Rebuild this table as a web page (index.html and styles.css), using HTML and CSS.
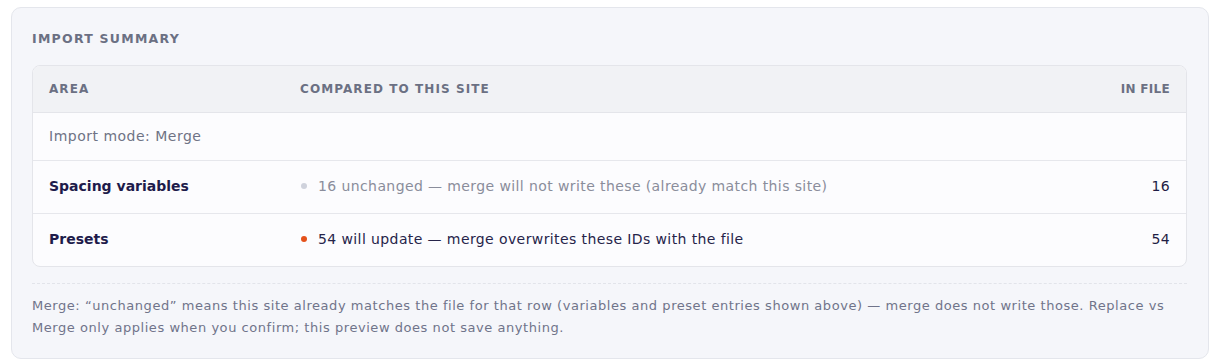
FILE: index.html
```html
<!DOCTYPE html>
<html lang="en">
<head>
<meta charset="utf-8">
<title>Import summary</title>
<link rel="stylesheet" href="styles.css">
</head>
<body>
<section class="panel">
  <h2 class="panel-title">Import summary</h2>
  <div class="table-wrap">
    <table class="summary">
      <colgroup>
        <col class="col-area">
        <col class="col-compare">
        <col class="col-count">
      </colgroup>
      <thead>
        <tr>
          <th>Area</th>
          <th>Compared to this site</th>
          <th class="num">In file</th>
        </tr>
      </thead>
      <tbody>
        <tr class="mode-row">
          <td colspan="3">Import mode: Merge</td>
        </tr>
        <tr>
          <td class="area">Spacing variables</td>
          <td class="status muted"><span class="dot dot-grey"></span>16 unchanged — merge will not write these (already match this site)</td>
          <td class="num">16</td>
        </tr>
        <tr>
          <td class="area">Presets</td>
          <td class="status"><span class="dot dot-orange"></span>54 will update — merge overwrites these IDs with the file</td>
          <td class="num">54</td>
        </tr>
      </tbody>
    </table>
  </div>
  <p class="note">Merge: “unchanged” means this site already matches the file for that row (variables and preset entries shown above) — merge does not write those. Replace vs Merge only applies when you confirm; this preview does not save anything.</p>
</section>
</body>
</html>
```

FILE: styles.css
```css
* { box-sizing: border-box; }

body {
  margin: 0;
  padding: 7px 4px 4px 11px;
  background: #ffffff;
  font-family: "DejaVu Sans", "Inter", sans-serif;
  color: #1f1d45;
}

.panel {
  background: #f5f6fa;
  border: 1px solid #e4e6ec;
  border-radius: 10px;
  padding: 22px 21px 19px 20px;
}

.panel-title {
  margin: 0 0 17px;
  font-size: 12.5px;
  line-height: 18px;
  font-weight: 700;
  letter-spacing: 0.1em;
  text-transform: uppercase;
  color: #6b7083;
}

.table-wrap {
  background: #fcfcfe;
  border: 1px solid #e4e5ea;
  border-radius: 8px;
  overflow: hidden;
}

.summary {
  width: 100%;
  border-collapse: collapse;
  font-size: 14px;
}

.col-area { width: 251px; }
.col-count { width: 120px; }

.summary th {
  background: #f1f2f5;
  text-align: left;
  font-size: 12px;
  line-height: 18px;
  font-weight: 700;
  letter-spacing: 0.09em;
  text-transform: uppercase;
  color: #6b7083;
  padding: 14px 16px 14px;
  border-bottom: 1px solid #e4e5ea;
}

.summary td {
  padding: 15px 16px 17px;
  line-height: 20px;
  border-bottom: 1px solid #e6e7ec;
  vertical-align: middle;
}

.summary tbody tr:last-child td { border-bottom: 0; }

.summary .num { text-align: right; letter-spacing: 0.3px; }

.mode-row td {
  padding-top: 13px;
  padding-bottom: 14px;
  color: #6f7385;
  letter-spacing: 0.5px;
}

.area {
  font-weight: 700;
  color: #1e1b4b;
}

.status { color: #26244a; letter-spacing: 0.4px; }
.status.muted { color: #8a8d9b; }

.dot {
  display: inline-block;
  width: 6px;
  height: 6px;
  border-radius: 50%;
  margin: 0 11px 2px 1px;
  vertical-align: middle;
}
.dot-grey { background: #cfd2dc; }
.dot-orange { background: #e4511b; }

.note {
  margin: 16px 0 0;
  padding-top: 11px;
  border-top: 1px dashed #e2e4ea;
  font-size: 13px;
  line-height: 22px;
  letter-spacing: 0.55px;
  color: #70748a;
}
```
